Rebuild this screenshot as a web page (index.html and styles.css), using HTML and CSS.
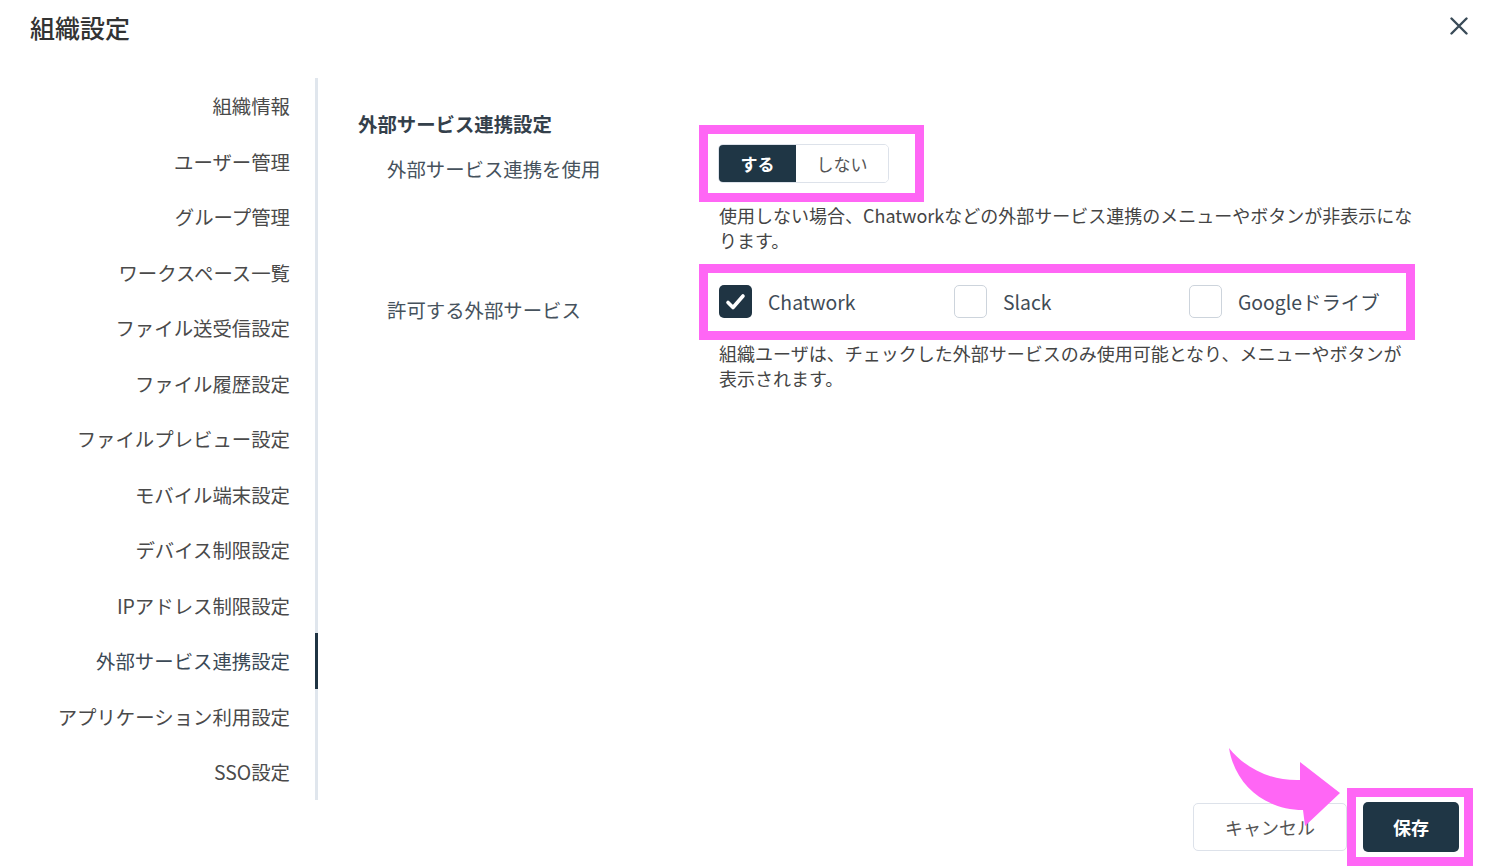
FILE: index.html
```html
<!DOCTYPE html>
<html lang="ja">
<head>
    <meta charset="UTF-8">
    <title>組織設定</title>
    <link rel="stylesheet" href="styles.css">
</head>
<body>
    <div class="modal">
        <header class="modal-header">
            <h1 class="modal-title">組織設定</h1>
            <button class="close-btn" aria-label="閉じる">
                <svg width="18" height="18" viewBox="0 0 18 18">
                    <path d="M1.5 1.5 L16.5 16.5 M16.5 1.5 L1.5 16.5" stroke="#3a4b58" stroke-width="2.4" stroke-linecap="round" fill="none"/>
                </svg>
            </button>
        </header>

        <div class="modal-body">
            <nav class="side-nav">
                <a class="nav-item">組織情報</a>
                <a class="nav-item">ユーザー管理</a>
                <a class="nav-item">グループ管理</a>
                <a class="nav-item">ワークスペース一覧</a>
                <a class="nav-item">ファイル送受信設定</a>
                <a class="nav-item">ファイル履歴設定</a>
                <a class="nav-item">ファイルプレビュー設定</a>
                <a class="nav-item">モバイル端末設定</a>
                <a class="nav-item">デバイス制限設定</a>
                <a class="nav-item">IPアドレス制限設定</a>
                <a class="nav-item active">外部サービス連携設定</a>
                <a class="nav-item">アプリケーション利用設定</a>
                <a class="nav-item">SSO設定</a>
            </nav>

            <section class="content">
                <h2 class="section-title">外部サービス連携設定</h2>

                <div class="form-row row-toggle">
                    <div class="form-label">外部サービス連携を使用</div>
                    <div class="form-control">
                        <div class="highlight hl-toggle">
                            <div class="segmented">
                                <span class="seg seg-on">する</span>
                                <span class="seg">しない</span>
                            </div>
                        </div>
                        <p class="help">使用しない場合、Chatworkなどの外部サービス連携のメニューやボタンが非表示になります。</p>
                    </div>
                </div>

                <div class="form-row row-services">
                    <div class="form-label">許可する外部サービス</div>
                    <div class="form-control">
                        <div class="highlight hl-services">
                            <label class="option">
                                <span class="checkbox checked">
                                    <svg width="33" height="33" viewBox="0 0 33 33">
                                        <path d="M9 17.5 L14 22.5 L24 11" stroke="#fff" stroke-width="3.6" stroke-linecap="round" stroke-linejoin="round" fill="none"/>
                                    </svg>
                                </span>
                                Chatwork
                            </label>
                            <label class="option">
                                <span class="checkbox"></span>
                                Slack
                            </label>
                            <label class="option last">
                                <span class="checkbox"></span>
                                Googleドライブ
                            </label>
                        </div>
                        <p class="help help-services">組織ユーザは、チェックした外部サービスのみ使用可能となり、メニューやボタンが表示されます。</p>
                    </div>
                </div>
            </section>
        </div>

        <footer class="modal-footer">
            <button class="btn btn-cancel">キャンセル</button>
            <div class="highlight hl-save">
                <button class="btn btn-save">保存</button>
            </div>
        </footer>

        <!-- annotation arrow -->
        <svg class="arrow" width="130" height="95" viewBox="0 0 130 95">
            <path d="M9 8 C25 28 50 41 80 40 L80 22 L120 53 L85 86 L83 70 C45 70 15 45 9 8 Z" fill="#ff66f5"/>
        </svg>
    </div>
</body>
</html>
```

FILE: styles.css
```css
* {
    box-sizing: border-box;
}

body {
    margin: 0;
    background-color: #fff;
    font-family: "Noto Sans CJK JP", "Noto Sans", sans-serif;
    color: #444;
    overflow: hidden;
}

.modal {
    position: relative;
    width: 1500px;
    height: 866px;
    display: flex;
    flex-direction: column;
}

.modal-header {
    height: 78px;
    display: flex;
    justify-content: space-between;
    align-items: flex-start;
    padding: 9px 32px 0 30px;
}

.modal-title {
    margin: 0;
    font-size: 25px;
    line-height: 36px;
    font-weight: 500;
    color: #333;
}

.close-btn {
    margin-top: 8px;
    padding: 0;
    border: none;
    background: none;
    width: 18px;
    height: 18px;
    cursor: pointer;
}

.close-btn svg {
    display: block;
}

.modal-body {
    display: flex;
    height: 722px;
}

/* Sidebar */
.side-nav {
    width: 318px;
    flex-shrink: 0;
    display: flex;
    flex-direction: column;
}

.nav-item {
    height: 55.5px;
    display: flex;
    align-items: center;
    justify-content: flex-end;
    padding-right: 25px;
    border-right: 3px solid #e0e6ed;
    font-size: 19.4px;
    color: #4a4a4a;
    cursor: pointer;
}

.nav-item.active {
    border-right-color: #1f3443;
    color: #3b4956;
}

/* Content */
.content {
    flex: 1;
    padding: 33px 0 0 40px;
}

.section-title {
    margin: 0;
    font-size: 19.4px;
    line-height: 26px;
    font-weight: 700;
    color: #34404b;
}

.form-row {
    display: flex;
    padding-left: 29px;
}

.row-toggle {
    margin-top: 7px;
}

.row-services {
    margin-top: 32.5px;
}

.form-label {
    width: 331px;
    flex-shrink: 0;
    padding-top: 12px;
    font-size: 19.4px;
    line-height: 26px;
    color: #46525d;
}

.form-control {
    width: 697px;
}

.highlight {
    border: 9px solid #ff66f5;
}

.hl-toggle {
    display: flex;
    width: fit-content;
    padding: 10px 26px 10px 10px;
    margin: -19px -35px -19px -19px;
}

.segmented {
    display: flex;
    height: 39px;
    border: 1.5px solid #dde2ea;
    border-radius: 5px;
    overflow: hidden;
}

.seg {
    width: 92px;
    display: flex;
    align-items: center;
    justify-content: center;
    font-size: 17px;
    color: #555;
    background-color: #fff;
}

.seg-on {
    width: 77px;
    background-color: #1f3645;
    color: #fff;
    font-weight: 700;
}

.help {
    margin: 19.5px 0 0 1px;
    font-size: 18px;
    line-height: 25px;
    color: #444;
}

.help-services {
    margin-top: 22.5px;
}

.hl-services {
    display: flex;
    width: fit-content;
    padding: 12px 26px 13px 11px;
    margin: -21px -35px -22px -19px;
}

.option {
    width: 235px;
    height: 33px;
    display: flex;
    align-items: center;
    gap: 16px;
    font-size: 19.4px;
    color: #3f4b56;
    cursor: pointer;
}

.option.last {
    width: auto;
}

.checkbox {
    width: 33px;
    height: 33px;
    border: 1.5px solid #cdd4dc;
    border-radius: 5px;
    background-color: #fff;
}

.checkbox.checked {
    border: none;
    background-color: #1f3443;
}

.checkbox svg {
    display: block;
}

/* Footer */
.modal-footer {
    margin-top: 2px;
    display: flex;
    justify-content: flex-end;
    align-items: center;
    gap: 16px;
    padding-right: 41px;
}

.btn {
    font-family: inherit;
    border-radius: 5px;
    cursor: pointer;
}

.btn-cancel {
    width: 154px;
    height: 48px;
    border: 1.5px solid #dde2ea;
    background-color: #fff;
    font-size: 18px;
    color: #555;
}

.btn-save {
    display: block;
    width: 96px;
    height: 50px;
    border: none;
    background-color: #1f3645;
    color: #fff;
    font-size: 18px;
    font-weight: 700;
}

.hl-save {
    padding: 5px 5px 5px 7px;
    margin: -14px -14px -14px -16px;
}

.arrow {
    position: absolute;
    left: 1220px;
    top: 740px;
}
```
